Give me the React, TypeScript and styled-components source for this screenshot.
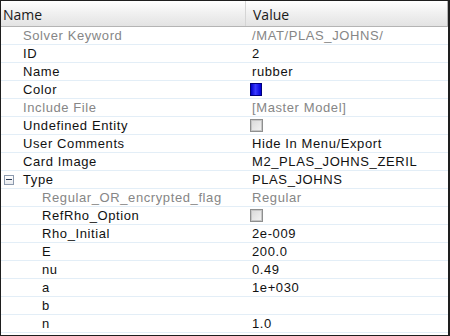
import React from "react";
import styled, { createGlobalStyle } from "styled-components";

const Global = createGlobalStyle`
  html, body {
    margin: 0;
    padding: 0;
    background: #ffffff;
  }
  * {
    box-sizing: border-box;
  }
`;

const Frame = styled.div`
  width: 450px;
  height: 336px;
  border: 1px solid #1e1e1e;
  border-right-width: 2px;
  background: #ffffff;
  overflow: hidden;
  font-family: "Liberation Sans", Arial, sans-serif;
  font-size: 13px;
  letter-spacing: 0.6px;
`;

const Header = styled.div`
  display: grid;
  grid-template-columns: 244px 1fr;
  height: 26px;
  border-bottom: 1px solid #b4b4b4;
  border-right: 1px solid #b4b4b4;
  background: linear-gradient(#ffffff, #f1f1f1 45%, #e3e3e3);
`;

const HeaderCell = styled.div<{ first?: boolean }>`
  display: flex;
  align-items: center;
  padding-left: ${(p) => (p.first ? "2px" : "7px")};
  padding-top: 2px;
  font-family: "Open Sans", "Liberation Sans", sans-serif;
  font-size: 14px;
  letter-spacing: 0;
  color: #1a1a1a;
  border-left: ${(p) => (p.first ? "none" : "1px solid #d5d5d5")};
`;

const Row = styled.div`
  display: grid;
  grid-template-columns: 244px 1fr;
  height: 18px;
  border-bottom: 1px solid #e3eef7;
`;

const NameCell = styled.div<{ depth: number; dim?: boolean }>`
  display: flex;
  align-items: center;
  padding-left: ${(p) => 3 + 19 * p.depth}px;
  color: ${(p) => (p.dim ? "#868686" : "#111111")};
  white-space: nowrap;
`;

const Slot = styled.span`
  display: inline-flex;
  align-items: center;
  width: 19px;
  height: 100%;
`;

const Toggle = styled.span`
  position: relative;
  width: 10px;
  height: 10px;
  border: 1px solid #8c9aae;
  background: linear-gradient(#ffffff, #e8ebef);
  &::after {
    content: "";
    position: absolute;
    left: 1px;
    right: 1px;
    top: 3px;
    height: 1px;
    background: #2b3a55;
  }
`;

const ValueCell = styled.div<{ dim?: boolean }>`
  display: flex;
  align-items: center;
  padding-left: 7px;
  color: ${(p) => (p.dim ? "#868686" : "#111111")};
  white-space: nowrap;
`;

const Swatch = styled.span`
  width: 12px;
  height: 13px;
  margin-left: -2px;
  border: 1px solid #00007a;
  background: linear-gradient(90deg, #0000c8, #3a3aff 45%, #0000d8);
`;

const Check = styled.span`
  width: 13px;
  height: 13px;
  margin-left: -2px;
  border: 1px solid #8e8f8f;
  background: linear-gradient(135deg, #d9d9d9, #f4f4f4);
  box-shadow: inset 0 0 0 1px #c6c6c6;
`;

type Item = {
  name: string;
  value?: string;
  depth: number;
  dim?: boolean;
  kind?: "color" | "check";
  open?: boolean;
};

const items: Item[] = [
  { name: "Solver Keyword", value: "/MAT/PLAS_JOHNS/", depth: 0, dim: true },
  { name: "ID", value: "2", depth: 0 },
  { name: "Name", value: "rubber", depth: 0 },
  { name: "Color", depth: 0, kind: "color" },
  { name: "Include File", value: "[Master Model]", depth: 0, dim: true },
  { name: "Undefined Entity", depth: 0, kind: "check" },
  { name: "User Comments", value: "Hide In Menu/Export", depth: 0 },
  { name: "Card Image", value: "M2_PLAS_JOHNS_ZERIL", depth: 0 },
  { name: "Type", value: "PLAS_JOHNS", depth: 0, open: true },
  { name: "Regular_OR_encrypted_flag", value: "Regular", depth: 1, dim: true },
  { name: "RefRho_Option", depth: 1, kind: "check" },
  { name: "Rho_Initial", value: "2e-009", depth: 1 },
  { name: "E", value: "200.0", depth: 1 },
  { name: "nu", value: "0.49", depth: 1 },
  { name: "a", value: "1e+030", depth: 1 },
  { name: "b", value: "", depth: 1 },
  { name: "n", value: "1.0", depth: 1 },
];

export default function App() {
  return (
    <>
      <Global />
      <Frame>
        <Header>
          <HeaderCell first>Name</HeaderCell>
          <HeaderCell>Value</HeaderCell>
        </Header>
        {items.map((it) => (
          <Row key={it.name}>
            <NameCell depth={it.depth} dim={it.dim}>
              <Slot>{it.open ? <Toggle /> : null}</Slot>
              {it.name}
            </NameCell>
            <ValueCell dim={it.dim}>
              {it.kind === "color" ? <Swatch /> : null}
              {it.kind === "check" ? <Check /> : null}
              {it.value}
            </ValueCell>
          </Row>
        ))}
      </Frame>
    </>
  );
}
